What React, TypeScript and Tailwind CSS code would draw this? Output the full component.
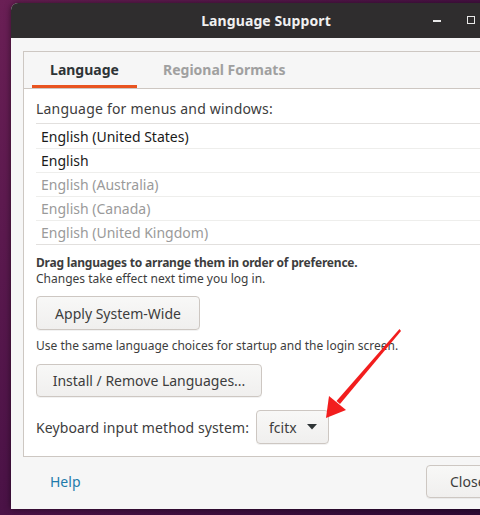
import React from "react";

const LANGS = [
  { name: "English (United States)", active: true },
  { name: "English", active: true },
  { name: "English (Australia)", active: false },
  { name: "English (Canada)", active: false },
  { name: "English (United Kingdom)", active: false },
];

function GtkButton({ children, className = "" }: { children: React.ReactNode; className?: string }) {
  return (
    <div
      className={`flex items-center rounded-[4px] border border-[#cdc7c2] bg-gradient-to-b from-[#f8f8f7] to-[#f0efee] shadow-[0_1px_0_rgba(0,0,0,0.05)] text-[14px] text-[#3d3d3d] ${className}`}
    >
      {children}
    </div>
  );
}

export default function App() {
  return (
    <div
      className="relative w-[480px] h-[515px] overflow-hidden bg-gradient-to-br from-[#6a1f55] via-[#4a1246] to-[#2e0a35] pt-[3px] pl-[11px]"
      style={{ fontFamily: '"Noto Sans", "Open Sans", sans-serif' }}
    >
      {/* ── Window ─────────────────────────────────────── */}
      <div className="w-[510px] h-[506px] flex flex-col rounded-t-[7px] overflow-hidden bg-[#f6f6f6] shadow-[0_0_6px_rgba(0,0,0,0.5)]">
        {/* Title bar */}
        <div className="relative h-[35px] shrink-0 bg-[#2f2d2e] flex items-center justify-center">
          <span className="text-[14px] font-bold text-[#f0f0f0] tracking-[0.1px]">Language Support</span>
          <div className="absolute left-[422px] top-[17px] w-[8px] h-[2px] bg-[#e8e8e8]" />
          <div className="absolute left-[456px] top-[13px] w-[8px] h-[8px] border border-[#e8e8e8]" />
        </div>

        {/* Body */}
        <div className="flex-1 flex flex-col pl-[12px] pt-[13px]">
          {/* Notebook frame */}
          <div className="h-[406px] border border-[#cdc7c2] border-r-0 bg-white flex flex-col">
            {/* Tabs */}
            <div className="h-[37px] shrink-0 bg-[#f6f6f6] border-b border-[#cdc7c2] flex items-end pl-[8px]">
              <div className="w-[105px] h-[36px] flex items-center justify-center border-b-[3px] border-[#e95420] pt-[1px]">
                <span className="text-[14px] font-bold text-[#2e3436]">Language</span>
              </div>
              <div className="ml-[26px] h-[36px] flex items-center pb-[2px]">
                <span className="text-[14px] font-bold text-[#a0a0a0]">Regional Formats</span>
              </div>
            </div>

            {/* Page */}
            <div className="flex-1 flex flex-col pl-[12px] pt-[11px]">
              <div className="text-[14px] text-[#3d3d3d] leading-[18px] tracking-[0.2px]">Language for menus and windows:</div>

              <div className="mt-[5px] border-t border-b border-[#e2e0de] bg-white">
                {LANGS.map((l, i) => (
                  <div
                    key={l.name}
                    className={`h-[24px] flex items-center pl-[5px] text-[14px] ${i > 0 ? "border-t border-[#eeeeec]" : ""} ${
                      l.active ? "text-[#1a1a1a]" : "text-[#9a9a9a]"
                    }`}
                  >
                    {l.name}
                  </div>
                ))}
              </div>

              <div className="mt-[10px] text-[12px] leading-[16px] font-bold text-[#3d3d3d] tracking-[-0.2px]">
                Drag languages to arrange them in order of preference.
              </div>
              <div className="text-[12px] leading-[16px] text-[#3d3d3d]">Changes take effect next time you log in.</div>

              <GtkButton className="mt-[9px] w-[164px] h-[34px] justify-center">Apply System-Wide</GtkButton>

              <div className="mt-[8px] text-[12px] leading-[15px] text-[#3d3d3d]">
                Use the same language choices for startup and the login screen.
              </div>

              <GtkButton className="mt-[11px] w-[226px] h-[33px] justify-center">Install / Remove Languages...</GtkButton>

              <div className="mt-[13px] flex items-center">
                <span className="text-[14px] text-[#3d3d3d] tracking-[0.1px]">Keyboard input method system:</span>
                <GtkButton className="ml-[7px] w-[73px] h-[34px] pl-[12px] gap-[10px]">
                  <span>fcitx</span>
                  <svg width="10" height="6" viewBox="0 0 10 6">
                    <path d="M0 0 L10 0 L5 5.5 Z" fill="#2e3436" />
                  </svg>
                </GtkButton>
              </div>
            </div>
          </div>

          {/* Footer */}
          <div className="flex-1 flex items-center pb-[4px]">
            <span className="ml-[27px] text-[14px] text-[#1f7bab]">Help</span>
            <GtkButton className="ml-auto mr-[10px] w-[85px] h-[33px] pl-[23px]">Close</GtkButton>
          </div>
        </div>
      </div>

      {/* Red annotation arrow */}
      <svg className="absolute left-0 top-0 pointer-events-none" width="480" height="515" viewBox="0 0 480 515">
        <path d="M399.5 329 L401 331 L340 404 L336.5 401 Z" fill="#f21d1d" />
        <path d="M326 418 L329 396 L346 410 Z" fill="#f21d1d" />
      </svg>
    </div>
  );
}
